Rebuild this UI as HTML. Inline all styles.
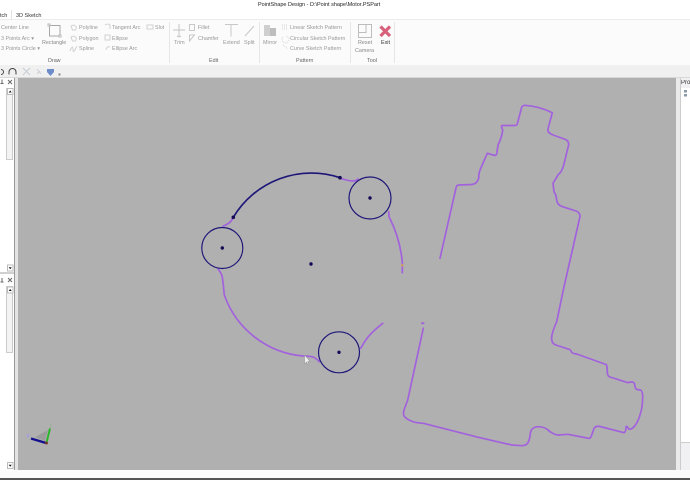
<!DOCTYPE html>
<html><head><meta charset="utf-8">
<style>
html,body{margin:0;padding:0;background:#fff}
#p{position:relative;width:690px;height:480px;overflow:hidden;background:#fff;font-family:"Liberation Sans",sans-serif}
.a{position:absolute}
.t{position:absolute;font-size:5.4px;line-height:8px;color:#989898;white-space:nowrap;filter:blur(.2px)}
svg{position:absolute;left:0;top:0}
</style></head><body>
<div id="p">
<div class="a" style="left:0;top:20px;width:690px;height:45px;background:#fbfbfb"></div>
<div class="a" style="left:0;top:65px;width:690px;height:12px;background:#f0f0f1"></div>
<div class="a" style="left:0;top:77px;width:690px;height:1px;background:#d8d8d8"></div>
<div class="a" style="left:0;top:19px;width:690px;height:1px;background:#ececec"></div>
<div class="a" style="left:11px;top:10px;width:1px;height:10px;background:#e4e4e4"></div>
<div class="a" style="left:18px;top:78px;width:658px;height:392px;background:#b1b0b1"></div>
<div class="a" style="left:14px;top:78px;width:1px;height:392px;background:#999"></div>
<div class="a" style="left:15px;top:78px;width:3px;height:392px;background:#e4e4e4"></div>
<div class="a" style="left:0;top:272px;width:14px;height:2px;background:#d0d0d0"></div>
<div class="a" style="left:676px;top:78px;width:4px;height:392px;background:#eaeaea"></div>
<div class="a" style="left:680px;top:78px;width:10px;height:392px;background:#fff;border-left:1px solid #ccc;box-sizing:border-box"></div>
<div class="a" style="left:681px;top:78px;width:9px;height:10px;background:#f0f0f2"></div>
<div class="a" style="left:681px;top:442px;width:9px;height:28px;background:#f1f1f4;border-top:1px solid #ccc;box-sizing:border-box"></div>
<div class="a" style="left:0;top:470px;width:690px;height:8px;background:#fbfbfb"></div>
<div class="a" style="left:0;top:478px;width:690px;height:2px;background:#555"></div>
<div class="a" style="left:6px;top:88px;width:7px;height:72px;background:#f3f3f3;border:1px solid #ccc;box-sizing:border-box"></div>
<div class="a" style="left:6px;top:286px;width:7px;height:67px;background:#f3f3f3;border:1px solid #ccc;box-sizing:border-box"></div>
<div class="t" style="left:258px;top:1px;font-size:5.5px;color:#222">PointShape Design - D:\Point shape\Motor.PSPart</div>
<div class="t" style="left:0;top:12px;color:#333;font-size:5.5px">tch</div>
<div class="t" style="left:16px;top:12px;color:#333;font-size:5.5px">3D Sketch</div>
<div class="t" style="left:1px;top:24px">Center Line</div>
<div class="t" style="left:1px;top:34.500px">3 Points Arc ▾</div>
<div class="t" style="left:1px;top:45px">3 Points Circle ▾</div>
<div class="t" style="left:42px;top:39px;color:#888">Rectangle</div>
<div class="t" style="left:79px;top:24px">Polyline</div>
<div class="t" style="left:79px;top:34.500px">Polygon</div>
<div class="t" style="left:79px;top:45px">Spline</div>
<div class="t" style="left:112px;top:24px">Tangent Arc</div>
<div class="t" style="left:112px;top:34.500px">Ellipse</div>
<div class="t" style="left:112px;top:45px">Ellipse Arc</div>
<div class="t" style="left:155px;top:24px">Slot</div>
<div class="t" style="left:48px;top:57px;color:#666">Draw</div>
<div class="t" style="left:174px;top:39px">Trim</div>
<div class="t" style="left:198px;top:24px">Fillet</div>
<div class="t" style="left:198px;top:34.500px">Chamfer</div>
<div class="t" style="left:209px;top:57px;color:#666">Edit</div>
<div class="t" style="left:223px;top:39px">Extend</div>
<div class="t" style="left:244px;top:39px">Split</div>
<div class="t" style="left:263px;top:39px">Mirror</div>
<div class="t" style="left:290px;top:24px">Linear Sketch Pattern</div>
<div class="t" style="left:290px;top:34.500px">Circular Sketch Pattern</div>
<div class="t" style="left:290px;top:45px">Curve Sketch Pattern</div>
<div class="t" style="left:296px;top:57px;color:#666">Pattern</div>
<div class="t" style="left:358px;top:39px;color:#888">Reset</div>
<div class="t" style="left:355px;top:46.500px;color:#888">Camera</div>
<div class="t" style="left:381px;top:39px;color:#333">Exit</div>
<div class="t" style="left:367px;top:57px;color:#666">Tool</div>
<div class="t" style="left:681px;top:79px;color:#333;font-size:6px">Prop</div>
<svg width="690" height="480" viewBox="0 0 690 480" fill="none">
<defs><filter id="b"><feGaussianBlur stdDeviation=".3"/></filter></defs>
<g stroke="#e6e6e6"><path d="M169.500 22V63M259.500 22V63M350.500 22V63M394.500 22V63"/></g>
<g filter="url(#b)">
<rect x="49.500" y="25.500" width="10.500" height="10.500" stroke="#a8a8a8"/>
<g fill="#fff" stroke="#bbb"><rect x="48" y="24" width="2" height="2"/><rect x="59" y="35" width="2" height="2"/></g>
<g stroke="#d2d2d2">
<path d="M71 26l3-1 2.500 2-1 3h-3zM71 37l3-1 2.500 2-1 3h-3zM70 51c2-5 3-5 3-1s2 0 4-4M105 25a4 4 0 0 1 5 0v4M105 35h5v5h-5zM106 50a3 3 0 0 1 4-3M147 25h6v4h-6z"/>
<path d="M173 30h12M179 24v12" stroke="#c4c4c4"/>
<path d="M177 36l2 1 2-1" stroke="#c4c4c4"/>
<path d="M189.500 24.500h5v6h-5zM189.500 41l5-6h-5zM225 24.500h13M231 24.500v12M245 36l9-10" stroke="#c8c8c8"/>
<path d="M282 25h6M282 27h6M282 29h6M283 37a3.500 3.500 0 1 0 3-1M283 45l5 4" stroke="#d4d4d4" stroke-dasharray="1 1"/>
</g>
<g fill="#cfcfcf"><rect x="264" y="25" width="6" height="11"/><rect x="270" y="28" width="6" height="8" fill="#bdbdbd"/></g>
<rect x="358.500" y="24.500" width="13" height="13" stroke="#bdbdbd"/><path d="M358.500 32.500H366V24.500" stroke="#bdbdbd"/>
</g>
<path d="M380.500 26.500l9.500 9.500M390 26.500l-9.500 9.500" stroke="#d9607a" stroke-width="3.200"/>
<path d="M1 69.500a2.500 2.500 0 1 1 0 5M9 74.500v-2.500a3.500 3.500 0 0 1 7 0v2.500" stroke="#444"/>
<path d="M23 68l7 7M30 68l-7 7" stroke="#c4ccd4"/><path d="M37 69l4 5M37 74l3-3" stroke="#ccd0d6"/>
<path d="M47 69h7v3l-3.500 4-3.500-4z" fill="#6d8cc9"/><rect x="58.500" y="73.500" width="2" height="2" fill="#888"/>
<path d="M2 79.500v4M.5 83.500h3M8 80l4 4M12 80l-4 4M2 278v4M.5 282h3M8 278l4 4M12 278l-4 4" stroke="#666"/>
<g fill="#fff" stroke="#bbb"><rect x="7.500" y="88.500" width="5.500" height="6"/><rect x="7.500" y="265" width="5.500" height="6"/><rect x="7.500" y="287" width="5.500" height="6"/><rect x="7.500" y="462.500" width="5.500" height="6"/></g>
<path d="M8.700 92.500h3l-1.500-2zM8.700 291h3l-1.500-2zM8.700 267.300h3l-1.500 2zM8.700 464.800h3l-1.500 2z" fill="#111"/>
<path d="M684 90h3v2.500h-3zM684 94h3v2.500h-3z" fill="#8b99a8"/>
<g stroke="#a262dc" stroke-width="1.700" stroke-linejoin="round" stroke-linecap="round" filter="url(#b)">
<path d="M440 258.300L456 188Q456.500 185 459 185L472 184.500Q477 184 478.700 178.300Q478.500 174 480 170L487.300 153.300L495 155.500Q497 155 497 152L498 145Q502 137 502.700 130L501.500 127Q501 125.500 503 125.500L515 125.500Q517 125.500 517.500 123L521.500 108Q522 105.300 525 105.300Q540 106.500 552.300 112.700L547.700 130Q548 133 553 135L565.700 139.500Q568.700 141 568.700 144.500L564 164Q562 172 558.300 174.500Q555 180 553 183.300Q553.500 187 554 192Q556 194 556.500 199Q557 205 562 206.500L576 211Q580 212.500 580 216.500L563.300 290L556.700 321.700Q552 332 551.500 338.500Q552 344 556 345L569 349.300Q570.500 349.500 571.500 352Q572 353.500 576.700 354L606 364.500Q607 365 607 368L607.500 374Q608 376.500 610 377L628 382.700Q633 381 634.500 383.500Q635 389 637 389.500L640.500 390Q642.700 391 642.700 397Q642.500 408 640 415Q638 422 634.300 426.500Q631 430 628.500 429Q627 425 626 427Q626 432 624 432.700L600 426.500Q596 425.500 594 428.500L591 437Q590 439 587 438L568 434.300L558.300 435Q555 435 550 431.700Q545 426.500 538 426.700Q532 427 530.500 432Q530 438 528.500 441.700Q527 445.500 522 445.700L511.700 445L478.300 437.300L423.300 423.300Q419 423 415 422.300Q407 420 404 416Q403 414 404 410L407.700 400L423.300 328.300"/>
<path d="M340 178Q348 181 353 181Q356 181 358 179"/>
<path d="M388.700 211.700L389 216.700Q400 238 402.300 262L402.300 272.700"/>
<path d="M233 217Q232 221 229 223Q226 225 223.300 226"/>
<path d="M218.300 269.300Q222 274 222.500 278Q223.500 286 224.300 295A92 92 0 0 0 303.300 356Q309 356 313 357Q316 358 319.300 361.700"/>
<path d="M382.700 323.300Q373 331 368 337Q364 342 360.700 348.300"/>
<path d="M422 323.300h1.500" stroke-width="2"/>
</g>
<g stroke="#1f1878" stroke-width="1.200" filter="url(#b)">
<circle cx="370" cy="198" r="21"/><circle cx="222.300" cy="248" r="20.500"/><circle cx="339" cy="352.300" r="20.500"/>
</g>
<path d="M233.300 217.300A91 91 0 0 1 340 177.700" stroke="#1f1878" stroke-width="1.700" filter="url(#b)"/>
<g fill="#120a55"><circle cx="370" cy="198" r="1.700"/><circle cx="222.300" cy="248" r="1.700"/><circle cx="339" cy="352.300" r="1.700"/><circle cx="311" cy="264" r="1.700"/><circle cx="233.300" cy="217.300" r="1.800"/><circle cx="340" cy="177.700" r="1.800"/></g>
<circle cx="402.300" cy="265.300" r="1.200" fill="#d9a04c"/>
<path d="M304.500 355v9l2-2 1.500 3 1-.5-1.300-3h2.500z" fill="#eee" stroke="#888" stroke-width=".5"/>
<path d="M35 437l13-7-3 11z" fill="#9c9c9c" filter="url(#b)"/>
<path d="M50.500 428l.5-5" stroke="#8fb08f" stroke-width=".8"/>
<path d="M46.500 442.500l3.500-14" stroke="#2bb52b" stroke-width="2"/>
<path d="M46 443l-15-4.500" stroke="#14108c" stroke-width="2.300"/>
<circle cx="46.500" cy="443" r="1.500" fill="#7a3a30"/>
<path d="M27 434l2 3.500M29 434l-2 3.500" stroke="#a0a0e0"/>
</svg>
</div>
</body></html>
